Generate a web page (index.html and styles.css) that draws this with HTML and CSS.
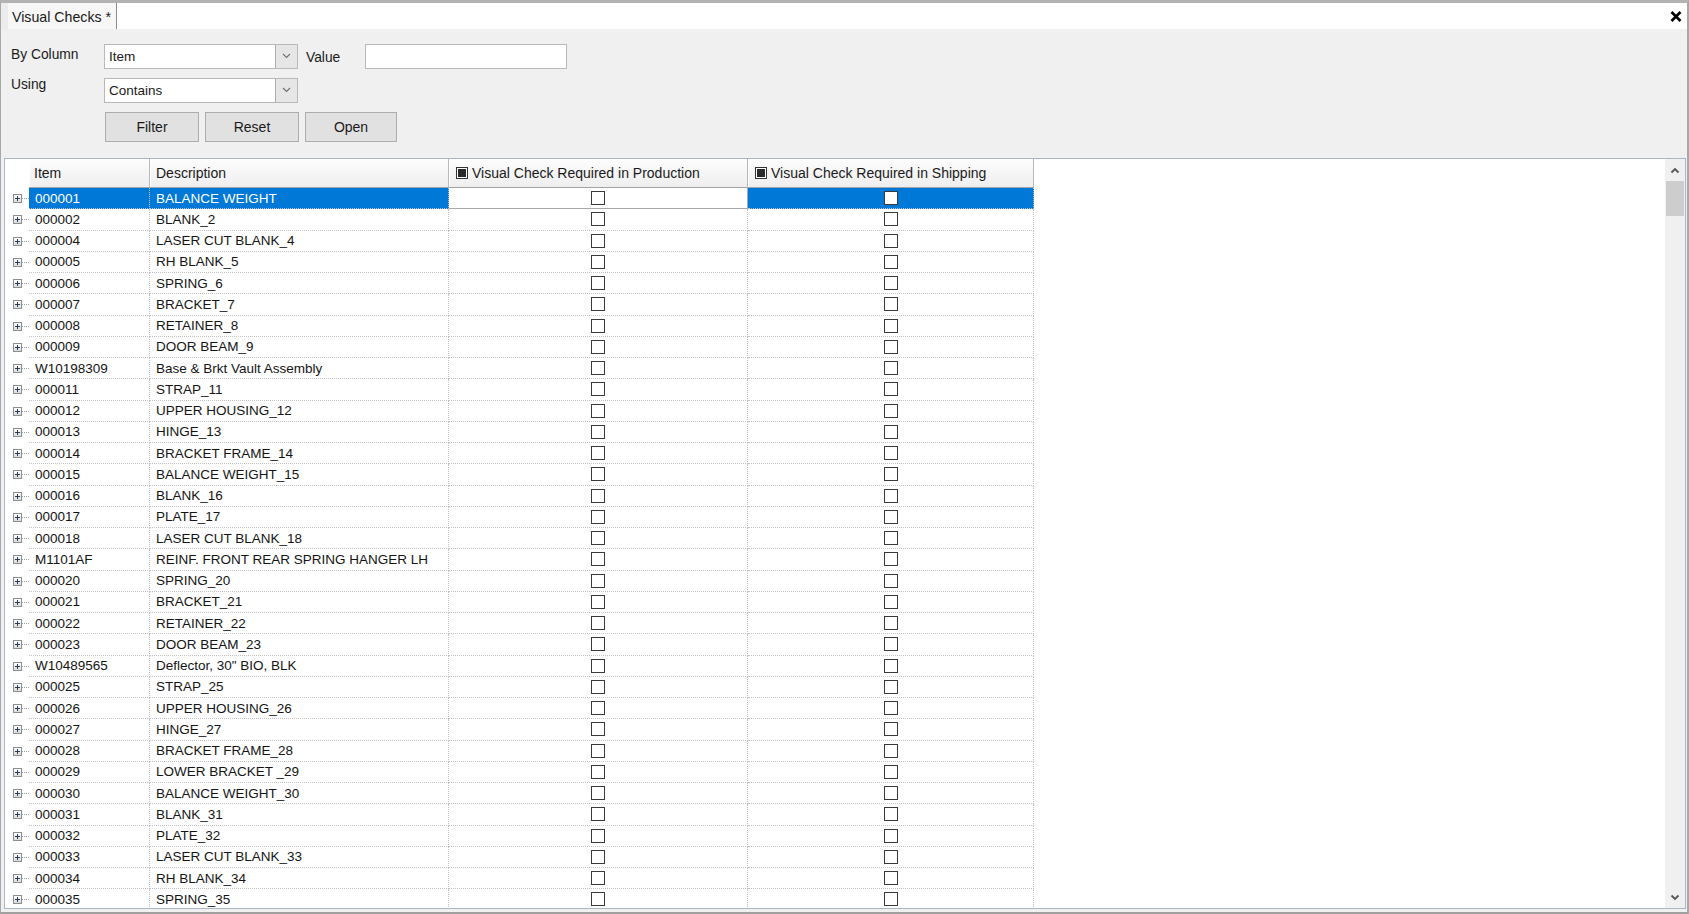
FILE: index.html
```html
<!DOCTYPE html>
<html>
<head>
<meta charset="utf-8">
<title>Visual Checks</title>
<link rel="stylesheet" href="styles.css">
</head>
<body>
<div class="window">
  <div class="tabbar">
    <div class="tabstrip">
      <div class="tab">Visual Checks *</div>
      <div class="close">
        <svg width="12" height="11" viewBox="0 0 12 11"><path d="M1.5 1 L10.5 10 M10.5 1 L1.5 10" stroke="#000" stroke-width="2.6" fill="none"/></svg>
      </div>
    </div>
  </div>

  <div class="filters">
    <div class="frow frow1">
      <div class="flabel flabel1">By Column</div>
      <div class="combo">
        <div class="combo-text">Item</div>
        <div class="combo-btn"><svg width="9" height="6" viewBox="0 0 9 6"><polyline points="1,1 4.5,4.5 8,1" fill="none" stroke="#707070" stroke-width="1.1"/></svg></div>
      </div>
      <div class="vlabel">Value</div>
      <div class="textbox"></div>
    </div>
    <div class="frow frow2">
      <div class="flabel flabel2">Using</div>
      <div class="combo">
        <div class="combo-text">Contains</div>
        <div class="combo-btn"><svg width="9" height="6" viewBox="0 0 9 6"><polyline points="1,1 4.5,4.5 8,1" fill="none" stroke="#707070" stroke-width="1.1"/></svg></div>
      </div>
    </div>
    <div class="btnrow">
      <div class="btn btn-filter">Filter</div>
      <div class="btn btn-reset">Reset</div>
      <div class="btn btn-open">Open</div>
    </div>
  </div>

  <div class="grid">
    <div class="gmain">
      <div class="ghead">
        <div class="hcorner"></div>
        <div class="hcell c-item">Item</div>
        <div class="hcell c-desc">Description</div>
        <div class="hcell c-prod hc"><span class="hcb"><span></span></span>Visual Check Required in Production</div>
        <div class="hcell c-ship hc"><span class="hcb"><span></span></span>Visual Check Required in Shipping</div>
      </div>
      <div class="gbody">
        <div class="row sel"><div class="rh"><span class="plus"></span><span class="conn"></span></div><div class="cell c-item">000001</div><div class="cell c-desc">BALANCE WEIGHT</div><div class="cell c-prod"><span class="cb"></span></div><div class="cell c-ship"><span class="cb"></span></div></div>
        <div class="row"><div class="rh"><span class="plus"></span><span class="conn"></span></div><div class="cell c-item">000002</div><div class="cell c-desc">BLANK_2</div><div class="cell c-prod"><span class="cb"></span></div><div class="cell c-ship"><span class="cb"></span></div></div>
        <div class="row"><div class="rh"><span class="plus"></span><span class="conn"></span></div><div class="cell c-item">000004</div><div class="cell c-desc">LASER CUT BLANK_4</div><div class="cell c-prod"><span class="cb"></span></div><div class="cell c-ship"><span class="cb"></span></div></div>
        <div class="row"><div class="rh"><span class="plus"></span><span class="conn"></span></div><div class="cell c-item">000005</div><div class="cell c-desc">RH BLANK_5</div><div class="cell c-prod"><span class="cb"></span></div><div class="cell c-ship"><span class="cb"></span></div></div>
        <div class="row"><div class="rh"><span class="plus"></span><span class="conn"></span></div><div class="cell c-item">000006</div><div class="cell c-desc">SPRING_6</div><div class="cell c-prod"><span class="cb"></span></div><div class="cell c-ship"><span class="cb"></span></div></div>
        <div class="row"><div class="rh"><span class="plus"></span><span class="conn"></span></div><div class="cell c-item">000007</div><div class="cell c-desc">BRACKET_7</div><div class="cell c-prod"><span class="cb"></span></div><div class="cell c-ship"><span class="cb"></span></div></div>
        <div class="row"><div class="rh"><span class="plus"></span><span class="conn"></span></div><div class="cell c-item">000008</div><div class="cell c-desc">RETAINER_8</div><div class="cell c-prod"><span class="cb"></span></div><div class="cell c-ship"><span class="cb"></span></div></div>
        <div class="row"><div class="rh"><span class="plus"></span><span class="conn"></span></div><div class="cell c-item">000009</div><div class="cell c-desc">DOOR BEAM_9</div><div class="cell c-prod"><span class="cb"></span></div><div class="cell c-ship"><span class="cb"></span></div></div>
        <div class="row"><div class="rh"><span class="plus"></span><span class="conn"></span></div><div class="cell c-item">W10198309</div><div class="cell c-desc">Base &amp; Brkt Vault Assembly</div><div class="cell c-prod"><span class="cb"></span></div><div class="cell c-ship"><span class="cb"></span></div></div>
        <div class="row"><div class="rh"><span class="plus"></span><span class="conn"></span></div><div class="cell c-item">000011</div><div class="cell c-desc">STRAP_11</div><div class="cell c-prod"><span class="cb"></span></div><div class="cell c-ship"><span class="cb"></span></div></div>
        <div class="row"><div class="rh"><span class="plus"></span><span class="conn"></span></div><div class="cell c-item">000012</div><div class="cell c-desc">UPPER HOUSING_12</div><div class="cell c-prod"><span class="cb"></span></div><div class="cell c-ship"><span class="cb"></span></div></div>
        <div class="row"><div class="rh"><span class="plus"></span><span class="conn"></span></div><div class="cell c-item">000013</div><div class="cell c-desc">HINGE_13</div><div class="cell c-prod"><span class="cb"></span></div><div class="cell c-ship"><span class="cb"></span></div></div>
        <div class="row"><div class="rh"><span class="plus"></span><span class="conn"></span></div><div class="cell c-item">000014</div><div class="cell c-desc">BRACKET FRAME_14</div><div class="cell c-prod"><span class="cb"></span></div><div class="cell c-ship"><span class="cb"></span></div></div>
        <div class="row"><div class="rh"><span class="plus"></span><span class="conn"></span></div><div class="cell c-item">000015</div><div class="cell c-desc">BALANCE WEIGHT_15</div><div class="cell c-prod"><span class="cb"></span></div><div class="cell c-ship"><span class="cb"></span></div></div>
        <div class="row"><div class="rh"><span class="plus"></span><span class="conn"></span></div><div class="cell c-item">000016</div><div class="cell c-desc">BLANK_16</div><div class="cell c-prod"><span class="cb"></span></div><div class="cell c-ship"><span class="cb"></span></div></div>
        <div class="row"><div class="rh"><span class="plus"></span><span class="conn"></span></div><div class="cell c-item">000017</div><div class="cell c-desc">PLATE_17</div><div class="cell c-prod"><span class="cb"></span></div><div class="cell c-ship"><span class="cb"></span></div></div>
        <div class="row"><div class="rh"><span class="plus"></span><span class="conn"></span></div><div class="cell c-item">000018</div><div class="cell c-desc">LASER CUT BLANK_18</div><div class="cell c-prod"><span class="cb"></span></div><div class="cell c-ship"><span class="cb"></span></div></div>
        <div class="row"><div class="rh"><span class="plus"></span><span class="conn"></span></div><div class="cell c-item">M1101AF</div><div class="cell c-desc">REINF. FRONT REAR SPRING HANGER LH</div><div class="cell c-prod"><span class="cb"></span></div><div class="cell c-ship"><span class="cb"></span></div></div>
        <div class="row"><div class="rh"><span class="plus"></span><span class="conn"></span></div><div class="cell c-item">000020</div><div class="cell c-desc">SPRING_20</div><div class="cell c-prod"><span class="cb"></span></div><div class="cell c-ship"><span class="cb"></span></div></div>
        <div class="row"><div class="rh"><span class="plus"></span><span class="conn"></span></div><div class="cell c-item">000021</div><div class="cell c-desc">BRACKET_21</div><div class="cell c-prod"><span class="cb"></span></div><div class="cell c-ship"><span class="cb"></span></div></div>
        <div class="row"><div class="rh"><span class="plus"></span><span class="conn"></span></div><div class="cell c-item">000022</div><div class="cell c-desc">RETAINER_22</div><div class="cell c-prod"><span class="cb"></span></div><div class="cell c-ship"><span class="cb"></span></div></div>
        <div class="row"><div class="rh"><span class="plus"></span><span class="conn"></span></div><div class="cell c-item">000023</div><div class="cell c-desc">DOOR BEAM_23</div><div class="cell c-prod"><span class="cb"></span></div><div class="cell c-ship"><span class="cb"></span></div></div>
        <div class="row"><div class="rh"><span class="plus"></span><span class="conn"></span></div><div class="cell c-item">W10489565</div><div class="cell c-desc">Deflector, 30" BIO, BLK</div><div class="cell c-prod"><span class="cb"></span></div><div class="cell c-ship"><span class="cb"></span></div></div>
        <div class="row"><div class="rh"><span class="plus"></span><span class="conn"></span></div><div class="cell c-item">000025</div><div class="cell c-desc">STRAP_25</div><div class="cell c-prod"><span class="cb"></span></div><div class="cell c-ship"><span class="cb"></span></div></div>
        <div class="row"><div class="rh"><span class="plus"></span><span class="conn"></span></div><div class="cell c-item">000026</div><div class="cell c-desc">UPPER HOUSING_26</div><div class="cell c-prod"><span class="cb"></span></div><div class="cell c-ship"><span class="cb"></span></div></div>
        <div class="row"><div class="rh"><span class="plus"></span><span class="conn"></span></div><div class="cell c-item">000027</div><div class="cell c-desc">HINGE_27</div><div class="cell c-prod"><span class="cb"></span></div><div class="cell c-ship"><span class="cb"></span></div></div>
        <div class="row"><div class="rh"><span class="plus"></span><span class="conn"></span></div><div class="cell c-item">000028</div><div class="cell c-desc">BRACKET FRAME_28</div><div class="cell c-prod"><span class="cb"></span></div><div class="cell c-ship"><span class="cb"></span></div></div>
        <div class="row"><div class="rh"><span class="plus"></span><span class="conn"></span></div><div class="cell c-item">000029</div><div class="cell c-desc">LOWER BRACKET _29</div><div class="cell c-prod"><span class="cb"></span></div><div class="cell c-ship"><span class="cb"></span></div></div>
        <div class="row"><div class="rh"><span class="plus"></span><span class="conn"></span></div><div class="cell c-item">000030</div><div class="cell c-desc">BALANCE WEIGHT_30</div><div class="cell c-prod"><span class="cb"></span></div><div class="cell c-ship"><span class="cb"></span></div></div>
        <div class="row"><div class="rh"><span class="plus"></span><span class="conn"></span></div><div class="cell c-item">000031</div><div class="cell c-desc">BLANK_31</div><div class="cell c-prod"><span class="cb"></span></div><div class="cell c-ship"><span class="cb"></span></div></div>
        <div class="row"><div class="rh"><span class="plus"></span><span class="conn"></span></div><div class="cell c-item">000032</div><div class="cell c-desc">PLATE_32</div><div class="cell c-prod"><span class="cb"></span></div><div class="cell c-ship"><span class="cb"></span></div></div>
        <div class="row"><div class="rh"><span class="plus"></span><span class="conn"></span></div><div class="cell c-item">000033</div><div class="cell c-desc">LASER CUT BLANK_33</div><div class="cell c-prod"><span class="cb"></span></div><div class="cell c-ship"><span class="cb"></span></div></div>
        <div class="row"><div class="rh"><span class="plus"></span><span class="conn"></span></div><div class="cell c-item">000034</div><div class="cell c-desc">RH BLANK_34</div><div class="cell c-prod"><span class="cb"></span></div><div class="cell c-ship"><span class="cb"></span></div></div>
        <div class="row"><div class="rh"><span class="plus"></span><span class="conn"></span></div><div class="cell c-item">000035</div><div class="cell c-desc">SPRING_35</div><div class="cell c-prod"><span class="cb"></span></div><div class="cell c-ship"><span class="cb"></span></div></div>
      </div>
    </div>
    <div class="vscroll">
      <div class="sb-btn"><svg width="10" height="7" viewBox="0 0 10 7"><polyline points="1.5,5.5 5,2 8.5,5.5" fill="none" stroke="#555" stroke-width="1.8"/></svg></div>
      <div class="sb-thumb"></div>
      <div class="sb-track"></div>
      <div class="sb-btn"><svg width="10" height="7" viewBox="0 0 10 7"><polyline points="1.5,1.5 5,5 8.5,1.5" fill="none" stroke="#555" stroke-width="1.8"/></svg></div>
    </div>
  </div>
</div>
</body>
</html>
```

FILE: styles.css
```css
html, body {
  margin: 0;
  padding: 0;
}

body {
  background: #f0f0f0;
  font-family: "Liberation Sans", Arial, sans-serif;
  font-size: 13.5px;
  color: #1a1a1a;
}

.window {
  width: 1689px;
  height: 914px;
  box-sizing: border-box;
  border-top: 3px solid #b3b3b3;
  border-left: 1px solid #a8a8a8;
  border-right: 2px solid #a8a8a8;
  border-bottom: 2px solid #a0a0a0;
  background: #f0f0f0;
  display: flex;
  flex-direction: column;
  overflow: hidden;
}

/* ---------- tab bar ---------- */
.tabbar {
  height: 26px;
  flex-shrink: 0;
  display: flex;
  padding-left: 7px;
  background: #ececec;
}

.tabstrip {
  flex: 1;
  display: flex;
  align-items: stretch;
  background: #fff;
}

.tab {
  width: 109px;
  box-sizing: border-box;
  padding-left: 4px;
  padding-top: 1px;
  border-right: 1px solid #8c8c8c;
  background: #f7f7f7;
  display: flex;
  align-items: center;
  color: #1a1a1a;
  font-size: 14.2px;
  white-space: nowrap;
}

.close {
  margin-left: auto;
  margin-right: 5px;
  display: flex;
  align-items: center;
}

/* ---------- filter panel ---------- */
.filters {
  flex-shrink: 0;
  padding: 14px 0 0 10px;
}

.frow {
  display: flex;
  align-items: center;
  height: 26px;
}

.frow2 {
  margin-top: 8px;
}

.flabel {
  width: 93px;
  flex-shrink: 0;
  font-size: 13.8px;
}

.flabel1 {
  margin-top: -3px;
}

.flabel2 {
  align-self: flex-start;
  margin-top: 0px;
}

.combo {
  width: 194px;
  height: 25px;
  box-sizing: border-box;
  border: 1px solid #b9b9b9;
  background: #fff;
  display: flex;
}

.combo-text {
  flex: 1;
  padding-left: 4px;
  display: flex;
  align-items: center;
}

.combo-btn {
  width: 21px;
  background: #e6e6e6;
  border-left: 1px solid #adadad;
  display: flex;
  align-items: center;
  justify-content: center;
}

.vlabel {
  width: 59px;
  margin-left: 8px;
  padding-top: 2px;
  font-size: 13.8px;
}

.textbox {
  width: 202px;
  height: 25px;
  box-sizing: border-box;
  border: 1px solid #b9b9b9;
  background: #fff;
}

.btnrow {
  display: flex;
  gap: 6px;
  margin-top: 9px;
  padding-left: 94px;
}

.btn {
  height: 30px;
  box-sizing: border-box;
  border: 1px solid #adadad;
  background: #e1e1e1;
  display: flex;
  align-items: center;
  justify-content: center;
  color: #1a1a1a;
  font-size: 14px;
}

.btn-filter, .btn-reset { width: 94px; }
.btn-open { width: 92px; }

/* ---------- grid ---------- */
.grid {
  flex: 1;
  min-height: 0;
  margin: 16px 1px 3px 3px;
  border: 1px solid #aab7c7;
  background: #fff;
  display: flex;
}

.gmain {
  flex: 1;
  min-width: 0;
  overflow: hidden;
  display: flex;
  flex-direction: column;
}

.ghead {
  height: 29px;
  flex-shrink: 0;
  display: flex;
}

.hcorner {
  width: 24px;
  flex-shrink: 0;
}

.hcell {
  box-sizing: border-box;
  height: 29px;
  flex-shrink: 0;
  background: linear-gradient(#fdfdfd, #eeeeee);
  border-right: 1px solid #b4bac2;
  border-bottom: 1px solid #a3a3a3;
  box-shadow: inset 1px 1px 0 #ffffff;
  display: flex;
  align-items: center;
  white-space: nowrap;
  color: #1a1a1a;
  font-size: 14px;
}

.hcell.c-item { padding-left: 5px; }
.hcell.c-desc { padding-left: 6px; }
.hcell.hc { padding-left: 7px; }

.hcb {
  width: 12px;
  height: 12px;
  box-sizing: border-box;
  border: 1px solid #333;
  background: #fff;
  padding: 1px;
  margin-right: 4px;
  display: inline-flex;
  flex-shrink: 0;
}

.hcb span {
  flex: 1;
  background: #2a2a2a;
}

.gbody {
  flex: 1;
  min-height: 0;
  overflow: hidden;
}

.row {
  height: 21.25px;
  display: flex;
}

.rh {
  width: 24px;
  flex-shrink: 0;
  box-sizing: border-box;
  padding-left: 8px;
  display: flex;
  align-items: center;
}

.plus {
  width: 9px;
  height: 9px;
  box-sizing: border-box;
  border: 1px solid #8e8e8e;
  background: linear-gradient(#ffffff, #dcdcdc);
  position: relative;
  flex-shrink: 0;
}

.plus::before {
  content: "";
  position: absolute;
  left: 1px;
  top: 3px;
  width: 5px;
  height: 1px;
  background: #2b3a55;
}

.plus::after {
  content: "";
  position: absolute;
  left: 3px;
  top: 1px;
  width: 1px;
  height: 5px;
  background: #2b3a55;
}

.conn {
  flex: 1;
  height: 0;
  border-top: 1px dotted #a0a0a0;
}

.cell {
  box-sizing: border-box;
  flex-shrink: 0;
  height: 100%;
  border-right: 1px dotted #c2c2c2;
  border-bottom: 1px dotted #c2c2c2;
  display: flex;
  align-items: center;
  white-space: nowrap;
  overflow: hidden;
  color: #141414;
}

.c-item { width: 121px; }
.c-desc { width: 299px; }
.c-prod { width: 299px; }
.c-ship { width: 286px; }

.cell.c-item { padding-left: 6px; }
.cell.c-desc { padding-left: 6px; }
.cell.c-prod, .cell.c-ship { justify-content: center; }

.cb {
  width: 14px;
  height: 14px;
  box-sizing: border-box;
  border: 1px solid #3a3a3a;
  background: #fff;
}

.row.sel .c-item,
.row.sel .c-desc,
.row.sel .c-ship {
  background: #0078d7;
  color: #fff;
}

.row.sel .c-prod {
  border-bottom: 1px solid #a8a8a8;
  border-right: 1px solid #a8a8a8;
}

/* ---------- scrollbar ---------- */
.vscroll {
  width: 20px;
  flex-shrink: 0;
  background: #f0f0f0;
  display: flex;
  flex-direction: column;
}

.sb-btn {
  height: 22px;
  flex-shrink: 0;
  display: flex;
  align-items: center;
  justify-content: center;
}

.sb-thumb {
  height: 35px;
  margin: 0 1px;
  background: #cdcdcd;
  flex-shrink: 0;
}

.sb-track {
  flex: 1;
}
```
